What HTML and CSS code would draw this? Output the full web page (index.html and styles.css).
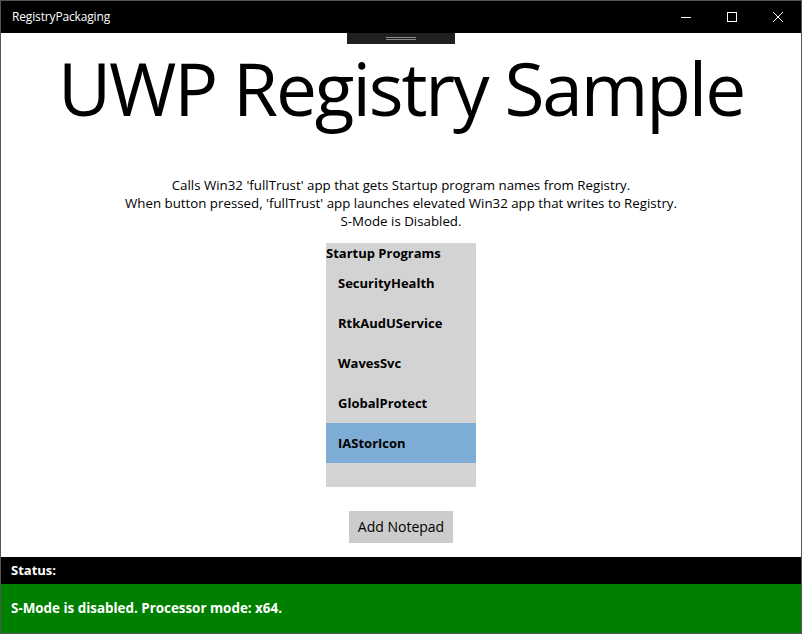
FILE: index.html
```html
<!DOCTYPE html>
<html>
<head>
<meta charset="utf-8">
<link rel="stylesheet" href="styles.css">
</head>
<body>
<div class="window">
  <div class="titlebar">
    <span class="app-title">RegistryPackaging</span>
    <div class="caption">
      <div class="cap-btn"><svg width="10" height="10" viewBox="0 0 10 10"><line x1="0" y1="5.5" x2="10" y2="5.5" stroke="#fff" stroke-width="1"/></svg></div>
      <div class="cap-btn"><svg width="10" height="10" viewBox="0 0 10 10"><rect x="0.5" y="0.5" width="9" height="9" fill="none" stroke="#fff" stroke-width="1"/></svg></div>
      <div class="cap-btn"><svg width="10" height="10" viewBox="0 0 10 10"><path d="M0 0L10 10M10 0L0 10" stroke="#fff" stroke-width="1"/></svg></div>
    </div>
  </div>
  <div class="content">
    <div class="handle"><span class="grip"></span><span class="grip"></span></div>
    <h1 class="heading">UWP Registry Sample</h1>
    <p class="desc">Calls Win32 'fullTrust' app that gets Startup program names from Registry.<br>When button pressed, 'fullTrust' app launches elevated Win32 app that writes to Registry.<br>S-Mode is Disabled.</p>
    <div class="list">
      <div class="list-head">Startup Programs</div>
      <div class="item">SecurityHealth</div>
      <div class="item">RtkAudUService</div>
      <div class="item">WavesSvc</div>
      <div class="item">GlobalProtect</div>
      <div class="item selected">IAStorIcon</div>
    </div>
    <div class="btn">Add Notepad</div>
    <div class="spacer"></div>
    <div class="status-label">Status:</div>
    <div class="status-msg">S-Mode is disabled. Processor mode: x64.</div>
  </div>
</div>
</body>
</html>
```

FILE: styles.css
```css
html, body {
  margin: 0;
  padding: 0;
  background: #fff;
}
body {
  font-family: "Segoe UI", "Open Sans", "Noto Sans", sans-serif;
}
.window {
  width: 802px;
  height: 634px;
  box-sizing: border-box;
  border: 1px solid #555;
  display: flex;
  flex-direction: column;
  overflow: hidden;
}
.titlebar {
  height: 32px;
  flex: none;
  background: #000;
  color: #fff;
  display: flex;
  align-items: center;
}
.app-title {
  font-size: 12px;
  padding-left: 11px;
  flex: 1;
  margin-top: -1px;
  letter-spacing: -0.15px;
}
.caption {
  display: flex;
  height: 100%;
}
.cap-btn {
  width: 46px;
  display: flex;
  align-items: center;
  justify-content: center;
}
.cap-btn svg { display: block; }
.content {
  flex: 1;
  position: relative;
  display: flex;
  flex-direction: column;
  align-items: center;
}
.handle {
  position: absolute;
  top: 0;
  left: 346px;
  width: 108px;
  height: 11px;
  background: #1f1f1f;
  display: flex;
  flex-direction: column;
  align-items: center;
  justify-content: center;
  gap: 1px;
}
.grip {
  display: block;
  width: 30px;
  height: 1px;
  background: #8a8a8a;
}
.heading {
  margin: 7px 0 0;
  font-weight: 400;
  font-size: 73px;
  letter-spacing: -2.1px;
  line-height: 96px;
  color: #000;
}
.desc {
  margin: 40px 0 0;
  font-size: 13.3px;
  line-height: 18px;
  text-align: center;
  color: #000;
}
.list {
  margin-top: 13px;
  width: 150px;
  height: 244px;
  background: #d3d3d3;
}
.list-head {
  font-size: 13px;
  font-weight: 700;
  line-height: 20px;
  padding-top: 0;
}
.item {
  height: 40px;
  line-height: 40px;
  padding-left: 12px;
  font-size: 13px;
  font-weight: 700;
}
.item.selected {
  background: #7dadd5;
}
.btn {
  margin-top: 24px;
  width: 104px;
  height: 32px;
  line-height: 32px;
  text-align: center;
  background: #cccccc;
  font-size: 14px;
}
.spacer { flex: 1; }
.status-label,
.status-msg {
  align-self: stretch;
  color: #fff;
  font-weight: 700;
  font-size: 13px;
  padding-left: 10px;
}
.status-label {
  background: #000;
  height: 27px;
  line-height: 27px;
}
.status-msg {
  background: #008000;
  height: 49px;
  line-height: 48px;
  font-size: 13.4px;
}
```
